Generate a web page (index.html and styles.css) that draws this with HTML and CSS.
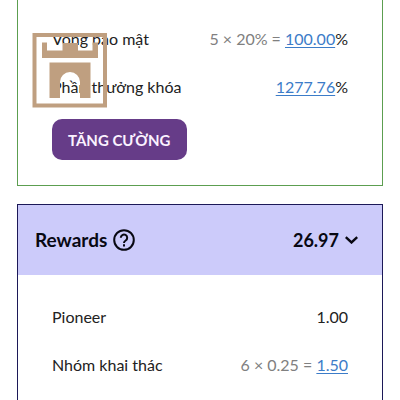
FILE: index.html
```html
<!DOCTYPE html>
<html lang="vi">
<head>
<meta charset="utf-8">
<meta name="viewport" content="width=device-width, initial-scale=1">
<title>Rewards</title>
<link rel="stylesheet" href="styles.css">
</head>
<body>
<main class="page">
  <section class="card card-security">
    <dl class="rows">
      <div class="row"><dt>Vòng bảo mật</dt><dd><span class="formula">5 × 20% = </span><a href="#">100.00</a>%</dd></div>
      <div class="row"><dt>Phần thưởng khóa</dt><dd><a href="#">1277.76</a>%</dd></div>
    </dl>
    <button class="boost" type="button">TĂNG CƯỜNG</button>
  </section>
  <section class="card card-rewards">
    <header class="card-header">
      <h2>Rewards</h2>
      <button class="icon-button" type="button" aria-label="Help">
        <svg width="22" height="22" viewBox="0 0 22 22" fill="none" stroke="currentColor" stroke-width="2">
          <circle cx="11" cy="11" r="9.8"/>
          <path d="M7.8 8.8a3.2 3.2 0 1 1 4.9 2.7c-1.2.8-1.7 1.2-1.7 2.4"/>
          <path d="M11 15.3v2.1"/>
        </svg>
      </button>
      <span class="total">26.97</span>
      <button class="icon-button" type="button" aria-label="Collapse">
        <svg width="13" height="8" viewBox="0 0 13 8" fill="none" stroke="currentColor" stroke-width="2.4"><path d="M.8 1.2l5.7 5.3 5.7-5.3"/></svg>
      </button>
    </header>
    <dl class="rows">
      <div class="row"><dt>Pioneer</dt><dd>1.00</dd></div>
      <div class="row"><dt>Nhóm khai thác</dt><dd><span class="formula">6 × 0.25 = </span><a href="#">1.50</a></dd></div>
    </dl>
  </section>
</main>
<svg class="castle" width="75" height="75" viewBox="0 0 75 75" aria-hidden="true">
  <path fill="none" stroke="currentColor" stroke-width="4" d="M2.500 2h70.500v70.500H2.500z"/>
  <path fill="currentColor" d="M10 9.500h5v8h15.500v-7.500h15.500v7.500h14.500v-8h5.500v15.500h-56z"/>
  <path fill="currentColor" d="M17.500 29.500h41v35.500H48V49a10 10 0 0 0-20 0v16H17.500z"/>
</svg>
</body>
</html>
```
FILE: styles.css
```css
* { box-sizing: border-box; }

body {
  margin: 0;
  overflow: hidden;
  background: #fff;
  color: #222;
  font: 16px/24px Lato, "Noto Sans", sans-serif;
}

.page {
  display: flex;
  flex-direction: column;
  gap: 18px;
  padding: 0 17px;
}

.card { border: 1px solid; }

.card-security {
  border-color: #5c9e50;
  border-top: 0;
  padding: 15px 0 25px;
}

.card-rewards {
  border-color: #1c1958;
  padding-bottom: 26px;
}

.card-header {
  display: flex;
  align-items: center;
  gap: 6px;
  height: 70px;
  padding: 0 24px 0 17px;
  background: #cccbfa;
  color: #080812;
}

.card-header h2,
.total {
  margin: 0;
  font-size: 18px;
  font-weight: 700;
}

.card-header h2 { font-size: 19px; }

.total { margin-left: auto; }

.icon-button {
  display: flex;
  padding: 0;
  border: 0;
  background: none;
  color: inherit;
}

.rows {
  margin: 0;
  padding: 0 34px;
}

.card-rewards .rows { padding-top: 18px; }

.row {
  display: flex;
  align-items: center;
  justify-content: space-between;
  height: 48px;
}

.row dd { margin: 0; }

.formula { color: #808080; }

a {
  color: #3c7cc8;
  text-decoration: underline;
  text-underline-offset: 2px;
}

.boost {
  display: block;
  height: 41px;
  margin: 8px 34px 0;
  padding: 0 16px;
  border: 0;
  border-radius: 10px;
  background: #663c88;
  color: #fbf2ff;
  font: inherit;
  font-size: 15px;
  font-weight: 700;
}

.castle {
  position: absolute;
  top: 33px;
  left: 32px;
  color: #bf9f80;
}
```
